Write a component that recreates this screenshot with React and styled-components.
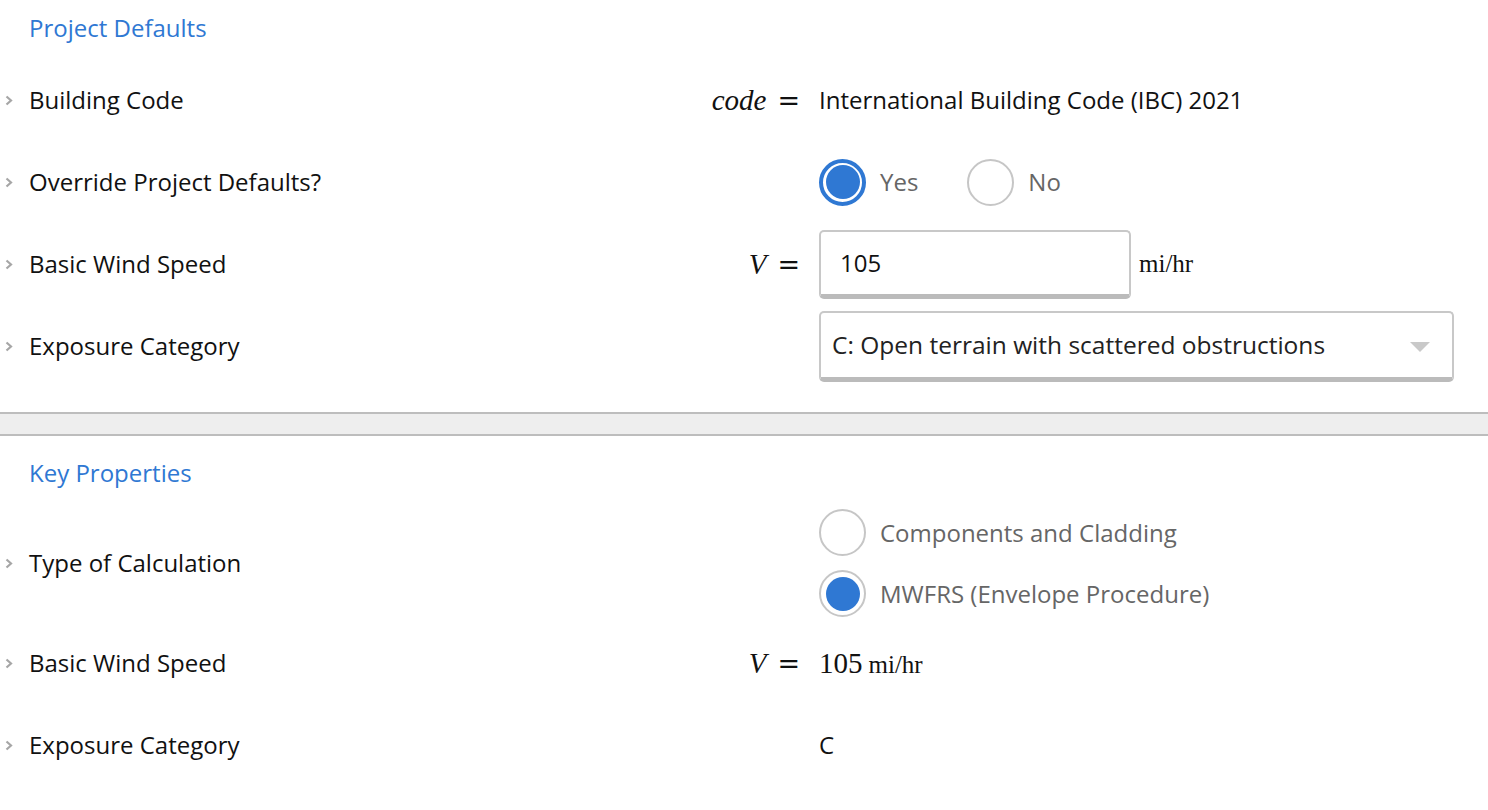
import React from "react";
import styled, { createGlobalStyle } from "styled-components";

const Global = createGlobalStyle`
  html, body { margin: 0; padding: 0; background: #fff; }
  body { font-family: "Open Sans", "Noto Sans", sans-serif; font-size: 24px; color: #111; }
  * { box-sizing: border-box; }
`;

const Page = styled.div`
  width: 1488px;
  display: flex;
  flex-direction: column;
`;

const Section = styled.section`
  display: flex;
  flex-direction: column;
`;

const SectionTitle = styled.div`
  height: 59px;
  padding: 12px 0 0 29px;
  line-height: 32px;
  color: #2f78d3;
  font-size: 24px;
`;

const Row = styled.div`
  display: grid;
  grid-template-columns: 29px 1fr 179px 669px;
  align-items: center;
  min-height: ${(p) => p.$h || 82}px;
`;

const Chevron = styled.div`
  display: flex;
  align-items: center;
  justify-content: flex-start;
  padding-left: 5px;
`;

const Label = styled.div`
  line-height: 32px;
  color: #111;
`;

const MathCell = styled.div`
  display: flex;
  justify-content: flex-end;
  align-items: baseline;
  padding-right: 19px;
  color: #111;
  white-space: nowrap;
`;

const MathVar = styled.i`
  font-family: "Liberation Serif", serif;
  font-size: 29px;
  font-style: italic;
  margin-right: 11px;
`;

const MathEq = styled.span`
  font-family: "DejaVu Serif", serif;
  font-size: 27px;
`;

const Value = styled.div`
  display: flex;
  align-items: center;
  color: #111;
  line-height: 32px;
`;

const RadioGroup = styled.div`
  display: flex;
  flex-direction: ${(p) => (p.$vertical ? "column" : "row")};
  gap: ${(p) => (p.$vertical ? "14px" : "49px")};
`;

const RadioOption = styled.label`
  display: flex;
  align-items: center;
  gap: 14px;
  color: #666;
  cursor: pointer;
`;

const RadioCircle = styled.span`
  width: 47px;
  height: 47px;
  border-radius: 50%;
  border: ${(p) => (p.$focus ? "4px solid #2f78d3" : "2px solid #c6c6c6")};
  background: #fff;
  display: flex;
  align-items: center;
  justify-content: center;
  flex: none;
`;

const RadioDot = styled.span`
  width: 34px;
  height: 34px;
  border-radius: 50%;
  background: #2f78d3;
`;

const Input = styled.div`
  width: 312px;
  height: 69px;
  border: 2px solid #c8c8c8;
  border-bottom: 5px solid #bbb;
  border-radius: 5px;
  padding-left: 19px;
  display: flex;
  align-items: center;
  color: #111;
`;

const Unit = styled.span`
  font-family: "Liberation Serif", serif;
  font-size: ${(p) => p.$size || 25}px;
  color: #111;
  margin-left: ${(p) => p.$gap || 8}px;
  align-self: ${(p) => (p.$top ? "flex-start" : "auto")};
  margin-top: ${(p) => (p.$top ? "21px" : "0")};
  line-height: 1;
`;

const Select = styled.div`
  width: 635px;
  height: 71px;
  border: 2px solid #c8c8c8;
  border-bottom: 5px solid #bbb;
  border-radius: 5px;
  padding: 0 22px 0 11px;
  display: flex;
  align-items: center;
  justify-content: space-between;
  color: #222;
  font-size: 24.5px;
`;

const Caret = styled.span`
  width: 0;
  height: 0;
  border-left: 10px solid transparent;
  border-right: 10px solid transparent;
  border-top: 10px solid #c9c9c9;
  margin-top: 4px;
`;

const Divider = styled.div`
  margin-top: 25px;
  height: 24px;
  background: #eeeeee;
  border-top: 2px solid #bdbdbd;
  border-bottom: 2px solid #bdbdbd;
  margin-bottom: 9px;
`;

const Result = styled.span`
  display: flex;
  align-items: baseline;
`;

const ResultNum = styled.span`
  font-family: "Liberation Serif", serif;
  font-size: 29px;
`;

const ChevronIcon = () => (
  <svg width="8" height="11" viewBox="0 0 8 11">
    <polyline points="1.5,1.5 6,5.5 1.5,9.5" fill="none" stroke="#a6a6a6" strokeWidth="2.2" />
  </svg>
);

const Field = ({ label, math, children, h }) => (
  <Row $h={h}>
    <Chevron>
      <ChevronIcon />
    </Chevron>
    <Label>{label}</Label>
    <MathCell>
      {math && (
        <>
          <MathVar>{math}</MathVar>
          <MathEq>=</MathEq>
        </>
      )}
    </MathCell>
    <Value>{children}</Value>
  </Row>
);

const Radio = ({ checked, focus, children }) => (
  <RadioOption>
    <RadioCircle $focus={focus}>{checked && <RadioDot />}</RadioCircle>
    {children}
  </RadioOption>
);

export default function App() {
  return (
    <Page>
      <Global />
      <Section>
        <SectionTitle>Project Defaults</SectionTitle>
        <Field label="Building Code" math="code">
          International Building Code (IBC) 2021
        </Field>
        <Field label="Override Project Defaults?">
          <RadioGroup>
            <Radio checked focus>Yes</Radio>
            <Radio>No</Radio>
          </RadioGroup>
        </Field>
        <Field label="Basic Wind Speed" math="V">
          <Input>105</Input>
          <Unit $top>mi/hr</Unit>
        </Field>
        <Field label="Exposure Category">
          <Select>
            <span>C: Open terrain with scattered obstructions</span>
            <Caret />
          </Select>
        </Field>
      </Section>
      <Divider />
      <Section>
        <SectionTitle>Key Properties</SectionTitle>
        <Field label="Type of Calculation" h={118}>
          <RadioGroup $vertical>
            <Radio>Components and Cladding</Radio>
            <Radio checked>MWFRS (Envelope Procedure)</Radio>
          </RadioGroup>
        </Field>
        <Field label="Basic Wind Speed" math="V">
          <Result>
            <ResultNum>105</ResultNum>
            <Unit $size={25} $gap={6}>mi/hr</Unit>
          </Result>
        </Field>
        <Field label="Exposure Category">C</Field>
      </Section>
    </Page>
  );
}
